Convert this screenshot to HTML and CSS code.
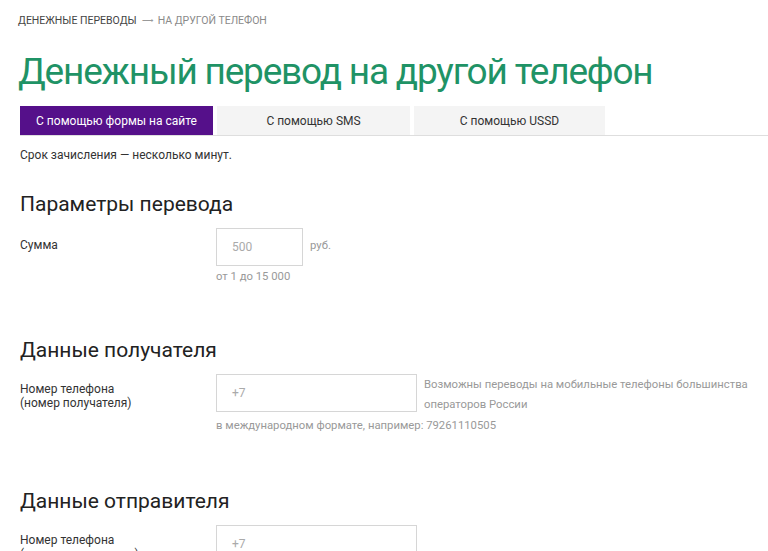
FILE: index.html
```html
<!DOCTYPE html>
<html lang="ru">
<head>
<meta charset="utf-8">
<link rel="stylesheet" href="styles.css">
</head>
<body>
<div class="page">
  <nav class="crumbs"><span class="crumb-main">Денежные переводы</span><span class="crumb-arrow">⟶</span><span class="crumb-cur">На другой телефон</span></nav>
  <h1 class="title">Денежный перевод на другой телефон</h1>
  <div class="tabs">
    <div class="tab tab-active">С помощью формы на сайте</div>
    <div class="tab">С помощью SMS</div>
    <div class="tab">С помощью USSD</div>
  </div>
  <p class="note">Срок зачисления — несколько минут.</p>

  <h2 class="section">Параметры перевода</h2>
  <div class="row">
    <div class="label label-sum">Сумма</div>
    <div class="field">
      <div class="line">
        <div class="input input-sum">500</div>
        <span class="unit">руб.</span>
      </div>
      <div class="hint">от 1 до 15 000</div>
    </div>
  </div>

  <h2 class="section section-2">Данные получателя</h2>
  <div class="row">
    <div class="label">Номер телефона<br>(номер получателя)</div>
    <div class="field">
      <div class="line">
        <div class="input input-phone">+7</div>
        <span class="side">Возможны переводы на мобильные телефоны большинства<br>операторов России</span>
      </div>
      <div class="hint">в международном формате, например: 79261110505</div>
    </div>
  </div>

  <h2 class="section section-3">Данные отправителя</h2>
  <div class="row">
    <div class="label">Номер телефона<br>(номер отправителя)</div>
    <div class="field">
      <div class="line">
        <div class="input input-phone">+7</div>
      </div>
    </div>
  </div>
</div>
</body>
</html>
```
FILE: styles.css
```css
html, body { margin: 0; padding: 0; background: #fff; }
body { font-family: Roboto, "Noto Sans", sans-serif; color: #333; overflow: hidden; height: 551px; }
.page { padding: 0 0 0 18px; }
.crumbs { padding-top: 15px; font-size: 10.5px; line-height: 12px; text-transform: uppercase; display: flex; align-items: center; gap: 5px; }
.crumb-main { color: #444; }
.crumb-arrow { color: #999; font-size: 8px; }
.crumb-cur { color: #8a8a8a; }
.title { margin: 23px 0 0; font-size: 37px; line-height: 44px; font-weight: 400; letter-spacing: -1.2px; color: #1f9366; }
.tabs { margin: 12px 0 0 2px; display: flex; gap: 4px; border-bottom: 1px solid #dedede; }
.tab { width: 193px; height: 29px; background: #f4f4f4; display: flex; align-items: center; justify-content: center; font-size: 12px; color: #333; }
.tab + .tab + .tab { width: 191px; }
.tab-active { background: #55108a; color: #fff; }
.note { margin: 12px 0 0 2px; font-size: 12px; line-height: 15px; color: #333; }
.section { margin: 28px 0 0 2px; font-size: 21px; line-height: 26px; font-weight: 400; color: #222; }
.section-2 { margin-top: 53px; }
.section-3 { margin-top: 55px; }
.row { display: flex; margin: 11px 0 0 2px; }
.label { width: 196px; font-size: 12px; line-height: 14px; color: #333; padding-top: 8px; }
.label-sum { padding-top: 10px; }
.field { display: flex; flex-direction: column; }
.line { display: flex; align-items: flex-start; gap: 7px; }
.input { box-sizing: border-box; height: 38px; border: 1px solid #d6d6d6; background: #fff; font-size: 12px; color: #aaa; display: flex; align-items: center; padding-left: 15px; }
.input-sum { width: 87px; }
.input-phone { width: 201px; }
.unit { font-size: 11.3px; color: #999; padding-top: 11px; }
.side { font-size: 11.3px; line-height: 20px; color: #999; padding-top: 1px; }
.hint { margin-top: 4px; font-size: 11.3px; line-height: 14px; color: #999; }
```
